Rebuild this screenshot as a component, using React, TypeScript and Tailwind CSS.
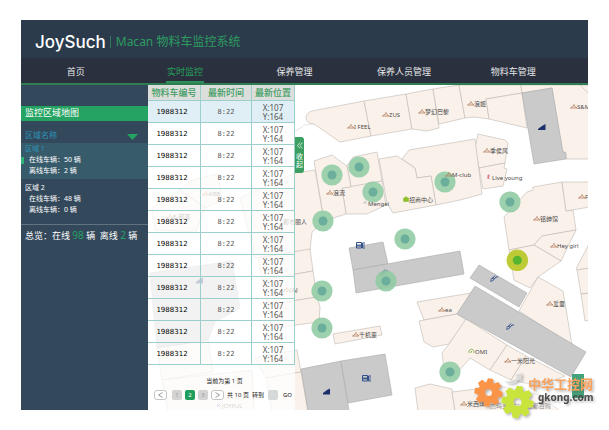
import { clsx } from 'clsx';

const NAV_ITEMS = ['首页', '实时监控', '保养管理', '保养人员管理', '物料车管理'];

const CARTS = Array.from({ length: 12 }, (_, i) => ({
  key: i,
  id: '1988312',
  time: '8:22',
  x: 107,
  y: 164,
}));

const AREAS = [
  { name: '区域 1', online: 50, offline: 2 },
  { name: '区域 2', online: 48, offline: 0 },
];

const SHOPS = [
  'M312 111Q306 113 306 118Q307 124 314 124L340 142L371 136L364 101Z',
  'M364 101L406 94L412 129L371 136Z',
  'M406 94L433 89L439 128L427 131L412 129Z',
  'M433 89L459 85L465 118L439 124Z',
  'M459 85L521 85L522 93L486 99L489 119L474 117L465 118Z',
  'M486 99L522 93L527 128L489 119Z',
  'M521 85L590 85L590 159L566 159L565 152L562 152L552 88L522 93Z',
  'M580 85L590 95L590 85Z',
  'M478 134L505 140L508 143L505 163L479 168L475 148Z',
  'M479 168L505 163L504 168L507 169L503 186L483 189Z',
  'M402 159L409 150L475 139L482 194L460 200L436 205L431 176L417 178L415 168Z',
  'M379 159L397 156L415 168L417 178L431 176L436 205L393 213L387 203Z',
  'M347 166L353 157L377 152L382 181L351 187Z',
  'M342 188L382 181L386 205L367 214L346 214Z',
  'M314 161L332 155L347 166L351 187L342 188L346 214L324 221Z',
  'M240 198L295 173L315 170L324 221L312 232L310 250L255 258Z',
  'M258 258L310 249L313 271L262 280Z',
  'M262 280L313 271L317 297L268 305Z',
  'M268 305L317 297L320 307L319 322L296 325L272 329Z',
  'M255 358L297 350L301 372L266 378Z',
  'M266 378L301 372L308 411L272 411Z',
  'M333 334L380 326L382 335L335 344Z',
  'M417 302L471 293L457 314L424 320Z',
  'M419 321L457 314L466 320L449 344L433 347L424 342Z',
  'M466 319L507 345L490 370L470 358L458 372L444 368L442 353L449 344Z',
  'M507 345L526 356L511 380L490 370Z',
  'M526 356L565 376L540 386L511 380Z',
  'M538 277L563 291L572 345L519 311Z',
  'M504 217L527 192L533 190L533 187L562 182L566 211L573 210L576 230L542 236L534 245L509 250Z',
  'M542 236L576 230L561 261L534 245Z',
  'M509 250L534 245L561 261L538 277L530 288L514 280Z',
  'M562 182L590 182L590 207L566 211Z',
  'M590 242L576 269L577 270L590 268Z',
  'M577 270L590 268L590 293L581 294Z',
  'M581 294L590 293L590 320L585 321Z',
  'M415 388L430 384L452 389L455 411L418 411Z',
  'M452 392L500 386L540 395L560 411L455 411Z',
  'M180 190L192 180L218 174L222 200L205 208Z',
  'M152 208L180 190L205 208L196 232L155 230Z',
  'M157 348L208 340L213 372L162 380Z',
  'M162 380L252 370L254 411L168 411Z',
];

const CORRIDORS = [
  'M522 93L552 88L563 152L566 153L566 159L534 164Z',
  'M349 248L383 242L388 264L353 270Z',
  'M353 270L460 251L464 274L356 293Z',
  'M479 265L527 293L519 307L470 278Z',
  'M475 286L586 352L571 377L457 314Z',
  'M301 369L341 361L349 411L308 411Z',
  'M341 361L385 354L392 395L348 403Z',
  'M150 273L232 261L240 308L215 322L208 340L157 348Z',
];

const LABELS = [
  { x: 354, y: 129, text: 'I FEEL' },
  { x: 389, y: 117, text: 'ZUS' },
  { x: 425, y: 114, text: '梦幻巴黎' },
  { x: 474, y: 106, text: '浪姬' },
  { x: 577, y: 109, text: 'S&M' },
  { x: 490, y: 153, text: '季侯风' },
  { x: 452, y: 177, text: 'M-club' },
  { x: 333, y: 195, text: '浪流' },
  { x: 540, y: 221, text: '铭绅馆' },
  { x: 585, y: 199, text: 'F' },
  { x: 557, y: 248, text: 'Hey girl' },
  { x: 553, y: 306, text: '爱童' },
  { x: 445, y: 312, text: 'ea' },
  { x: 511, y: 363, text: '一米阳光' },
  { x: 359, y: 337, text: '千机变' },
  { x: 467, y: 406, text: '米西琪' },
  { x: 209, y: 196, text: 'KBB' },
  { x: 173, y: 219, text: 'E-部落' },
  { x: 290, y: 292, text: 'J&J' },
];

const PLAIN_LABELS = [
  { x: 368, y: 206, text: 'Mengei' },
  { x: 409, y: 202, text: '招商中心' },
  { x: 492, y: 180, text: 'Live young' },
  { x: 475, y: 354, text: 'OMI' },
  { x: 283, y: 224, text: '都市丽人' },
  { x: 222, y: 408, text: 'JOYFUL' },
  { x: 490, y: 408, text: '杰玛金小站' },
  { x: 522, y: 408, text: 'L 万都百购' },
];

const CART_PINS = [
  [332, 175],
  [359, 167],
  [373, 192],
  [323, 221],
  [405, 239],
  [386, 281],
  [322, 291],
  [322, 328],
  [445, 182],
  [510, 202],
  [450, 372],
];

// Floor map, drawn under the cart table as well
function FloorMap() {
  return (
    <svg
      viewBox="148 85 441 325"
      preserveAspectRatio="xMinYMin slice"
      className="absolute inset-0 h-full w-full bg-white"
      role="img"
      aria-label="监控区域地图"
    >
      <g fill="#faf1ea" stroke="#bdb9b2" strokeWidth="0.6">
        {SHOPS.map((d) => (
          <path key={d} d={d} />
        ))}
      </g>
      <path d="M285 139Q295 131 305 125L314 124" fill="none" stroke="#d5d5d5" strokeWidth="0.6" />
      <g fill="#cacaca" stroke="#a9a9a9" strokeWidth="0.6">
        {CORRIDORS.map((d) => (
          <path key={d} d={d} />
        ))}
      </g>

      {/* stairs */}
      <g fill="#1d2f6b">
        <path d="M538 130V129L540 127.500L542 126L545.500 124V130Z" />
        <path d="M323 394.500V393L325 391.500L327 390L330 388.500V394.500Z" />
        <path d="M196 283.500V282L198 280.500L200 279L203 277.500V283.500Z" />
      </g>
      {/* lifts */}
      {[
        [356, 242],
        [362, 375],
      ].map(([x, y]) => (
        <g key={x} transform={`translate(${x} ${y})`} fill="none" stroke="#34518c">
          <path d="M0.5 0.5H5.5V6H0.5ZM9 1H6.5V6H9" />
          <path d="M2 2V5M4 2V5M1 3.5H5M8 2V5" strokeWidth="0.8" />
        </g>
      ))}
      {/* escalators */}
      {[
        [490, 275],
        [506, 323],
        [380, 269],
      ].map(([x, y]) => (
        <g key={x} transform={`translate(${x} ${y})`} fill="none" stroke="#34518c">
          <path d="M0 6H2.5L6 2H8M0.5 4H2L5 0.5" />
          <path d="M3 2.5V4" strokeWidth="1.4" />
        </g>
      ))}

      {CART_PINS.map(([x, y]) => (
        <g key={`${x}-${y}`}>
          <circle cx={x} cy={y} r="10.6" fill="#8fcba3" fillOpacity="0.88" />
          <circle cx={x} cy={y} r="4.5" fill="#6bae9b" />
        </g>
      ))}
      <circle cx="517.3" cy="260.3" r="10.8" fill="#bfcb36" />
      <circle cx="517.3" cy="260.3" r="4.5" fill="#56b42f" />

      <g className="font-['Noto_Sans','Noto_Sans_CJK_SC',sans-serif] text-[6px]" fill="#4a4a4a">
        {LABELS.map(({ x, y, text }) => (
          <g key={text}>
            <path
              d={`M${x - 3} ${y - 5}v1.5l3 2.5h-6.5l3.5 -2.5`}
              fill="none"
              stroke="#b07a5c"
              strokeWidth="0.8"
            />
            <text x={x} y={y}>
              {text}
            </text>
          </g>
        ))}
        {PLAIN_LABELS.map(({ x, y, text }) => (
          <text key={text} x={x} y={y}>
            {text}
          </text>
        ))}
      </g>
      <path d="M403.500 198h5v3.500h-5ZM404.500 198q1.500 -3 3 0" fill="#8fbf2c" stroke="#8fbf2c" strokeWidth="0.6" />
      <path d="M469 353v-2q2.500 -4 5 0v2M471 353v-1.500h1" fill="none" stroke="#7ba63f" strokeWidth="0.8" />
      <path d="M488 175v4M488 175h1v2h-1l1.500 2" fill="none" stroke="#d0607c" strokeWidth="0.8" />
      <path d="M364 204v-2q1 -2 2 0v2" fill="none" stroke="#aaa" strokeWidth="0.6" />
      <path d="M217 404l3 3M220 404l-3 3" stroke="#5568b0" />
    </svg>
  );
}

function Sidebar() {
  return (
    <aside className="w-[127px] shrink-0 bg-[#33485a] text-[7px] text-white">
      <h2 className="mt-[21px] h-[15px] bg-[#25a363] pl-1 text-[9px] leading-[14px]">
        监控区域地图
      </h2>
      <button
        type="button"
        className="mt-1.5 flex h-[15px] w-full items-center justify-between pr-2.5 pl-1 text-[8px] leading-[15px] text-[#2a94b8]"
      >
        区域名称
        <svg viewBox="0 0 11 6" className="mt-1 h-1.5 w-[11px]" aria-hidden="true">
          <path d="M0 0H11L5.500 6Z" fill="#25a363" />
        </svg>
      </button>
      <ul className="mt-px">
        {AREAS.map((area, i) => (
          <li
            key={area.name}
            className={clsx('relative h-9 pl-1 leading-[11px]', i === 0 ? 'bg-[#385b6b]' : 'mt-[3px]')}
          >
            {i === 0 && <span className="absolute top-3.5 left-0 h-[7px] w-[3px] bg-[#2fb27a]" />}
            <h3 className={clsx(i === 0 && 'text-[#2a94b8]')}>{area.name}</h3>
            <p className="pl-1">在线车辆：{area.online} 辆</p>
            <p className="pl-1">离线车辆：{area.offline} 辆</p>
          </li>
        ))}
      </ul>
      <p className="mt-1.5 border-t border-[#5f7382] pt-[3px] pl-1 text-[9px] leading-[14px] whitespace-nowrap">
        总览：在线 <span className="text-[10px] text-[#25a363]">98</span> 辆&nbsp; 离线{' '}
        <span className="text-[10px] text-[#25a363]">2</span> 辆
      </p>
    </aside>
  );
}

function Pagination() {
  const arrow =
    'flex h-2.5 w-[13px] items-center justify-center rounded-[3px] border border-[#c4c4c4] bg-white';
  const page = 'h-2.5 w-2.5 rounded-[2px] text-center';

  return (
    <nav aria-label="分页" className="pt-[11px] text-[6px] leading-[10px] text-[#222]">
      <p className="pl-1.5 text-center">当前为第 1 页</p>
      <div className="mt-1 flex items-center gap-[3px] pl-1.5 whitespace-nowrap">
        <button type="button" aria-label="上一页" className={arrow}>
          <svg viewBox="0 0 5 6" className="h-1.5 w-[5px]" fill="none" stroke="#999">
            <path d="M4.500 0.500L0.500 3L4.500 5.500" />
          </svg>
        </button>
        <button type="button" className={clsx(page, 'ml-0.5 bg-[#d3d3d3] text-[#999]')}>1</button>
        <button type="button" aria-current="page" className={clsx(page, 'bg-[#1f9d5c] text-white')}>2</button>
        <button type="button" className={clsx(page, 'bg-[#d3d3d3] text-[#999]')}>3</button>
        <button type="button" aria-label="下一页" className={arrow}>
          <svg viewBox="0 0 5 6" className="h-1.5 w-[5px]" fill="none" stroke="#999">
            <path d="M0.500 0.500L4.500 3L0.500 5.500" />
          </svg>
        </button>
        <span>共 10 页</span>
        <label htmlFor="goto">转到</label>
        <input id="goto" className="ml-px h-2.5 w-2.5 rounded-[2px] bg-[#d6d9d9]" />
        <button type="button" className="ml-0.5">GO</button>
      </div>
    </nav>
  );
}

function CartTable() {
  return (
    <section className="relative w-[147px] shrink-0 bg-white/75">
      <table className="w-full table-fixed border-separate border-spacing-0 text-center">
        <colgroup>
          <col className="w-[53px]" />
          <col className="w-[51px]" />
          <col />
        </colgroup>
        <thead>
          <tr className="h-4 bg-[#dcdedb] text-[9px] leading-[15px] text-[#3f9c63]">
            {['物料车编号', '最新时间', '最新位置'].map((title) => (
              <th key={title} className="border-r border-b border-[#9ccfcb] p-0 font-medium whitespace-nowrap">
                {title}
              </th>
            ))}
          </tr>
        </thead>
        <tbody>
          {CARTS.map((cart, i) => (
            <tr key={cart.key} className={clsx('h-[22px]', i === 0 && 'bg-[#e0eef6]')}>
              <td className="border-r border-b border-[#9ccfcb] p-0 pt-0.5 pr-1 font-['DejaVu_Sans',sans-serif] text-[7px] text-black">
                {cart.id}
              </td>
              <td className="border-r border-b border-[#9ccfcb] p-0 pt-0.5 font-['DejaVu_Sans_Mono',monospace] text-[7px] text-[#555]">
                {cart.time}
              </td>
              <td className="border-r border-b border-[#9ccfcb] p-0 text-[8px] leading-[9px] text-[#555]">
                X:{cart.x}
                <br />
                Y:{cart.y}
              </td>
            </tr>
          ))}
        </tbody>
      </table>
      <Pagination />
      <button
        type="button"
        className="absolute top-[52px] left-full flex h-9 w-[9px] flex-col items-center justify-center rounded-r-[3px] bg-[#3a9f60] text-[7px] leading-[8px] text-white"
      >
        <svg viewBox="0 0 6 7" className="mb-1 h-[7px] w-1.5" fill="none" stroke="#fff" strokeWidth="0.7">
          <path d="M3 0.500L0.500 3.500L3 6.500M5.500 0.500L3 3.500L5.500 6.500" />
        </svg>
        <span>收</span>
        <span>起</span>
      </button>
    </section>
  );
}

function Gear({ x, y, r, color }: { x: number; y: number; r: number; color: string }) {
  return (
    <g transform={`translate(${x} ${y})`}>
      <circle r={r * 0.5} fill="none" stroke={color} strokeWidth={r * 0.5} />
      {Array.from({ length: 8 }).map((_, i) => (
        <path
          key={i}
          d={`M${-r * 0.27} ${-r * 0.65}L${-r * 0.18} ${-r}H${r * 0.18}L${r * 0.27} ${-r * 0.65}Z`}
          fill={color}
          transform={`rotate(${i * 45 + 8})`}
        />
      ))}
    </g>
  );
}

function SiteMark() {
  return (
    <svg
      viewBox="460 360 149 70"
      className="pointer-events-none absolute right-0 bottom-0 h-[70px] w-[149px]"
      role="img"
      aria-label="中华工控网 gkong.com"
    >
      <defs>
        <filter id="haze" x="-20%" y="-40%" width="140%" height="180%">
          <feGaussianBlur stdDeviation="4" />
        </filter>
        <filter id="drop" x="-20%" y="-20%" width="150%" height="150%">
          <feDropShadow dx="1.500" dy="1.500" stdDeviation="1.200" floodColor="#555" floodOpacity="0.45" />
        </filter>
      </defs>
      <rect x="484" y="384" width="110" height="26" rx="12" fill="#fff" fillOpacity="0.5" filter="url(#haze)" />
      <path d="M572 374H584V398H572Z" fill="#45a37c" />
      <g filter="url(#drop)">
        <path d="M504 381Q513 383 518 377L515 375L522 373L521 381L519 379Q513 387 504 381Z" fill="#dadada" />
        <Gear x={488.500} y={392.500} r={14} color="#f9944a" />
        <Gear x={517.500} y={402} r={16} color="#c9e43c" />
        <text x="528" y="389" fill="#f7a15c" className="font-['Noto_Sans_CJK_SC',sans-serif] text-[13px] font-bold">
          中华工控网
        </text>
        <text x="538" y="401" fill="#4a4a4a" className="font-['Noto_Sans',sans-serif] text-[10px] font-bold">
          gkong.com
        </text>
      </g>
    </svg>
  );
}

export default function App() {
  return (
    <div className="relative bg-white px-[21px] py-5 font-['Noto_Sans','Noto_Sans_CJK_SC',sans-serif]">
      <div className="overflow-hidden">
        <header className="flex h-[38px] items-center bg-[#2b3b4b] pt-1.5 pl-3.5">
          <h1 className="font-['Inter',sans-serif] text-[17px] leading-5 font-medium text-white">JoySuch</h1>
          <span className="ml-1 h-3 w-px bg-[#2f7a5c]" />
          <span className="ml-[5px] text-[12px] leading-5 text-[#2b9b60]">Macan 物料车监控系统</span>
        </header>
        <nav className="grid h-[27px] grid-cols-5 border-b-2 border-[#2f7d52] bg-[#2a303d] pr-5">
          {NAV_ITEMS.map((item, i) => (
            <a
              key={item}
              href="#"
              className={clsx(
                'mx-auto flex items-center border-b-2 px-px pt-1 text-[9px]',
                i === 1 ? 'border-[#2f8f58] text-[#25a05c]' : 'border-transparent text-[#e4e6e8]',
              )}
            >
              {item}
            </a>
          ))}
        </nav>
        <main className="relative flex h-[325px]">
          <Sidebar />
          <div className="relative flex flex-1">
            <FloorMap />
            <CartTable />
          </div>
        </main>
      </div>
      <SiteMark />
    </div>
  );
}
